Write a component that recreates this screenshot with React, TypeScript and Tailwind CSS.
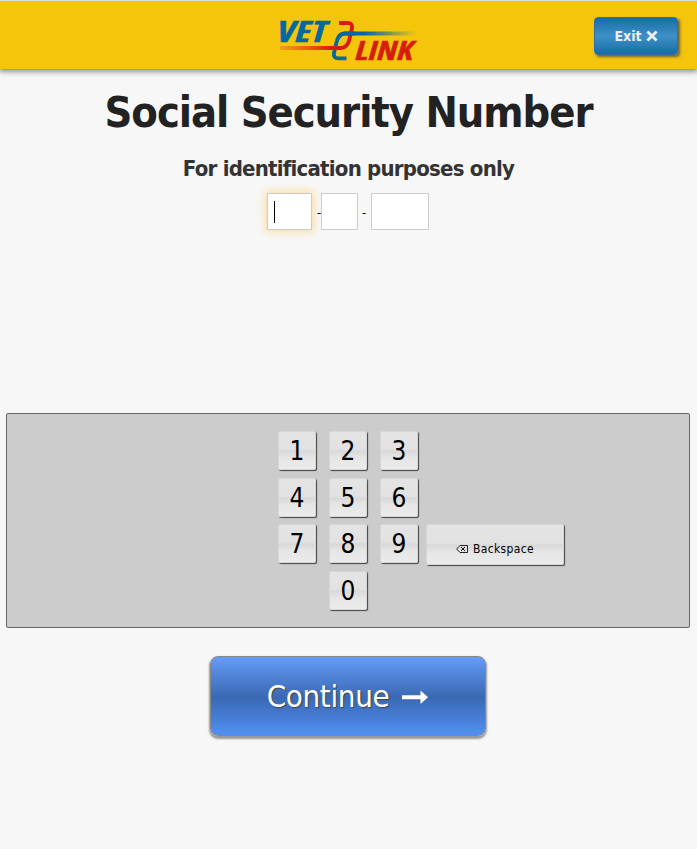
import React from "react";

const ui = "font-['DejaVu_Sans_Condensed','DejaVu_Sans',sans-serif] [font-stretch:75%]";

const keyStyle =
  "w-[38px] h-[39px] shrink-0 rounded-[2px] border border-[#d6d6d6] bg-[linear-gradient(#e4e4e4_0%,#e2e2e2_46%,#d9d9d9_52%,#e6e6e6_70%,#ebebeb_100%)] shadow-[1px_1px_1px_#444]";

function Key({ n }: { n: string }) {
  return (
    <button className={`${keyStyle} flex items-center justify-center pt-px text-[26px] leading-none text-black`}>
      <span>{n}</span>
    </button>
  );
}

function Logo() {
  return (
    <svg className="block overflow-visible" width="152" height="56" viewBox="272 13 152 56" role="img" aria-label="VET LINK">
      <defs>
        <linearGradient id="red" gradientUnits="userSpaceOnUse" x1="279" y1="0" x2="330" y2="0">
          <stop offset="0" stopColor="#df3a10" stopOpacity="0.25" />
          <stop offset="1" stopColor="#d61d0b" />
        </linearGradient>
        <linearGradient id="blue" gradientUnits="userSpaceOnUse" x1="364" y1="0" x2="415" y2="0">
          <stop offset="0" stopColor="#05689f" />
          <stop offset="1" stopColor="#05689f" stopOpacity="0" />
        </linearGradient>
      </defs>
      <text x="276" y="41.5" fill="#05689f" stroke="#05689f" strokeWidth="0.5" fontSize="28" fontWeight="700" fontStyle="italic" fontFamily="'Open Sans', sans-serif" textLength="50" lengthAdjust="spacingAndGlyphs">VET</text>
      <text x="354.6" y="60.3" fill="#d61d0b" stroke="#d61d0b" strokeWidth="0.5" fontSize="27.5" fontWeight="700" fontStyle="italic" fontFamily="'Open Sans', sans-serif" textLength="58" lengthAdjust="spacingAndGlyphs">LINK</text>
      <g fill="none" strokeWidth="3.8">
        <path d="M345.5 58.4H337.5Q332 58.4 333 53L335.3 43Q337.4 33.5 344 33.5H415.5" stroke="url(#blue)" />
        <path d="M338 23H346.5Q352 23 351 28L348.6 38.5Q346.5 48 340 48H279" stroke="url(#red)" />
        <path d="M336.8 38.5Q339 33.5 344 33.5H354" stroke="#05689f" />
      </g>
    </svg>
  );
}

export default function App() {
  return (
    <div className={`${ui} h-[849px] w-full overflow-hidden bg-[#f7f7f7] text-black`}>
      <header className="grid h-[69px] grid-cols-[1fr_152px_1fr] border-t border-[#dcdcdc] bg-[#f5c50c] shadow-[0_1px_6px_1px_#777]">
        <div />
        <div className="pt-[12px]"><Logo /></div>
        <div className="flex justify-end pt-4 pr-[19px]">
          <button className="flex h-[38px] w-[84px] items-center justify-center gap-[4px] rounded-[4px] border border-[#2f6cb0] bg-[linear-gradient(#156da3,#3f90c8_50%,#156da3)] text-[14px] font-bold text-[#eee] shadow-[2px_2px_3px_#6b6040]">
            <span>Exit</span>
            <svg width="12" height="12" viewBox="0 0 12 12" className="block">
              <path d="M1.4 1.4 10.6 10.6M10.6 1.4 1.4 10.6" stroke="#eee" strokeWidth="2.8" />
            </svg>
          </button>
        </div>
      </header>

      <h1 className="mt-[18px] h-[50px] text-center text-[43px] leading-[50px] font-bold tracking-[-1.04px] whitespace-nowrap text-[#222]">
        Social Security Number
      </h1>
      <h2 className="mt-[18px] h-[28px] text-center text-[22px] leading-[28px] font-bold tracking-[-0.77px] whitespace-nowrap text-[#333]">
        For identification purposes only
      </h2>

      <div className="mt-[10px] flex h-[37px] pl-[267px] text-[13px] leading-[40px]">
        <div className="flex w-[45px] items-center border border-[#ccc] bg-white pl-[6px] shadow-[0_0_8px_2px_#fbdfa3]">
          <span className="h-[22px] w-px bg-black" />
        </div>
        <span className="w-[9px] pl-[5px]">-</span>
        <div className="w-[37px] border border-[#ccc] bg-white" />
        <span className="w-[13px] pl-[4px]">-</span>
        <div className="w-[58px] border border-[#ccc] bg-white" />
      </div>

      <section className="mt-[183px] mr-[7px] ml-[6px] flex h-[215px] flex-col gap-[7.67px] rounded-[2px] border border-[#666] bg-[#ccc] pt-[17px] pl-[271px]">
        <div className="flex gap-[13px]"><Key n="1" /><Key n="2" /><Key n="3" /></div>
        <div className="flex gap-[13px]"><Key n="4" /><Key n="5" /><Key n="6" /></div>
        <div className="flex h-[39px] gap-[13px]">
          <Key n="7" /><Key n="8" /><Key n="9" />
          <button className={`${keyStyle} -ml-[5px] h-[41px]! w-[138px]! flex items-center justify-center gap-[5px] pt-[8px] text-[12px] tracking-[0.32px]`}>
            <svg width="12" height="8" viewBox="0 0 12 8" className="block" fill="none" stroke="#111">
              <path d="M4 .5H11.5V7.5H4L.7 4Z" strokeWidth=".9" />
              <path d="M5 2 9 6M9 2 5 6" strokeWidth="1" />
            </svg>
            <span>Backspace</span>
          </button>
        </div>
        <div className="flex pl-[51px]"><Key n="0" /></div>
      </section>

      <button className="mt-[28px] ml-[210px] flex h-[80px] w-[276px] items-center justify-center gap-[12px] rounded-[8px] border border-[#888] bg-[linear-gradient(#659cf8,#3a68b3_52%,#5190f3)] pt-px text-[31px] tracking-[-0.35px] text-white shadow-[0_2px_2px_1px_#999] [text-shadow:1px_1px_1px_#444]">
        <span>Continue</span>
        <svg width="28" height="16" viewBox="0 0 28 16" className="block">
          <path d="M1 6.2H19.5V1.5L27 8.2 19.5 14.9V10.3H1Z" fill="#fff" />
        </svg>
      </button>
    </div>
  );
}
